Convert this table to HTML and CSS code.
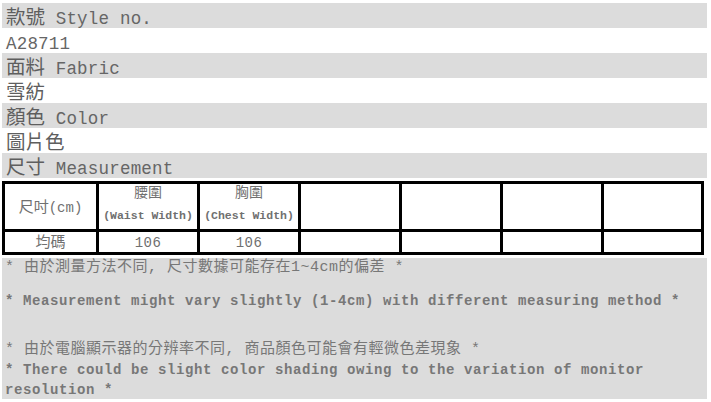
FILE: index.html
```html
<!DOCTYPE html>
<html>
<head>
    <meta charset="utf-8">
    <meta name="viewport" content="width=device-width,initial-scale=1.0"/>
    <title>A28711 尺寸表</title>
    <link rel="stylesheet" href="styles.css">
</head>

<body>

    <!-- 商品資料 -->
    <div class="spec">
        <div class="row head">款號<span class="en"> Style no.</span></div>
        <div class="row"><span class="en">A28711</span></div>
        <div class="row head">面料<span class="en"> Fabric</span></div>
        <div class="row">雪紡</div>
        <div class="row head">顏色<span class="en"> Color</span></div>
        <div class="row">圖片色</div>
        <div class="row head">尺寸<span class="en"> Measurement</span></div>
    </div>

    <!-- 尺寸表 -->
    <table class="size">
        <tr class="top">
            <td class="c1 mid">尺吋<span class="en">(cm)</span></td>
            <td class="c2">腰圍<small>(Waist Width)</small></td>
            <td class="c2">胸圍<small>(Chest Width)</small></td>
            <td class="c2"></td>
            <td class="c2"></td>
            <td class="c2"></td>
            <td class="c3"></td>
        </tr>
        <tr class="val">
            <td>均碼</td>
            <td><span class="en">106</span></td>
            <td><span class="en">106</span></td>
            <td></td>
            <td></td>
            <td></td>
            <td></td>
        </tr>
    </table>

    <!-- 說明 -->
    <div class="note">
        <p class="zh first">* 由於測量方法不同, 尺寸數據可能存在1~4cm的偏差 *</p>
        <p class="en second">* Measurement might vary slightly (1-4cm) with different measuring method *</p>
        <p class="zh">* 由於電腦顯示器的分辨率不同, 商品顏色可能會有輕微色差現象 *</p>
        <p class="en">* There could be slight color shading owing to the variation of monitor resolution *</p>
    </div>

</body>
</html>
```

FILE: styles.css
```css
*{box-sizing:border-box;  margin:0;  padding:0;  }
body{margin:3px 4px 0 2px;  background:#fff;  color:#666;  font-family:"Liberation Mono","Noto Sans CJK TC",monospace;  }

.en{font-family:"Liberation Mono","Noto Sans CJK TC",monospace;  }

/* 商品資料 */
.spec{width:705px;  }
.row{height:25px;  line-height:25px;  padding-left:4px;  font-size:19.5px;  color:#5e5e5e;  font-family:"Noto Sans CJK TC",sans-serif;  white-space:pre;  }
.row .en{font-size:17.5px;  letter-spacing:0.2px;  color:#666;  }
.row.head{background:#dcdcdc;  }

/* 尺寸表 */
.size{margin-top:3px;  width:702px;  table-layout:fixed;  border-spacing:0;  border-collapse:separate;  border-left:3px solid #000;  border-top:3px solid #000;  font-family:"Noto Sans CJK TC",sans-serif;  color:#707070;  }
.size td{box-sizing:border-box;  border-right:3px solid #000;  border-bottom:3px solid #000;  padding:0;  text-align:center;  vertical-align:top;  font-size:14px;  line-height:15px;  }
.size .c1{width:94px;  }
.size .c2{width:101px;  }
.size .c3{width:100px;  }
.size .top td{height:48px;  }
.size .top td.mid{vertical-align:middle;  font-size:15px;  }
.size .top small{display:block;  margin-top:10px;  font-family:"Liberation Mono",monospace;  font-size:11.5px;  line-height:14px;  font-weight:bold;  }
.size .mid .en{font-size:14px;  }
.size .val td{height:20px;  line-height:17px;  font-size:15px;  }
.size .val .en{font-size:14px;  letter-spacing:0.5px;  }

/* 說明 */
.note{margin-top:3px;  width:705px;  height:141px;  padding-left:3px;  background:#dcdcdc;  color:#777;  }
.note p{line-height:20px;  }
.note .zh{font-size:15px;  letter-spacing:0.5px;  }
.note .en{font-size:14px;  letter-spacing:0.6px;  font-weight:bold;  }
.note .first{margin-bottom:13px;  }
.note .second{margin-bottom:29px;  }
```
